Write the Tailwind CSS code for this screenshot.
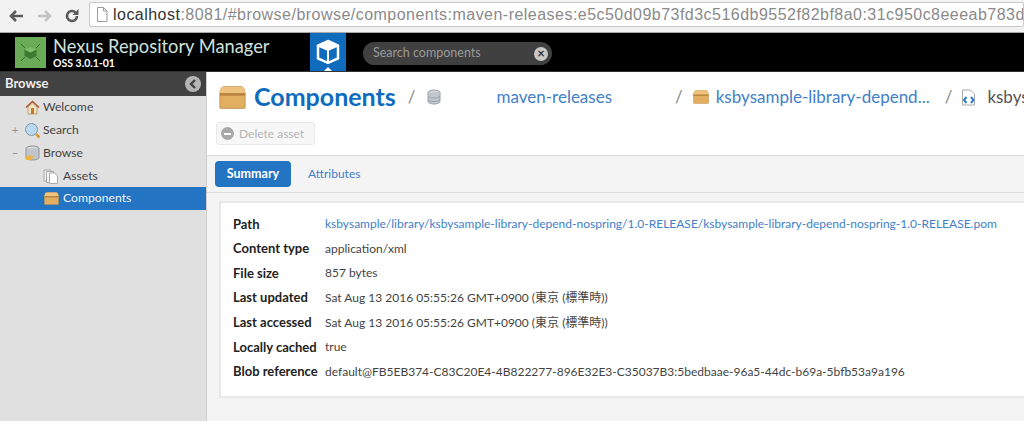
<!DOCTYPE html>
<html lang="en">
<head>
  <meta charset="UTF-8" />
  <title>Nexus Repository Manager</title>
  <script src="https://cdn.jsdelivr.net/npm/@tailwindcss/browser@4"></script>
</head>
<body class="w-[1024px] h-[421px] overflow-hidden bg-[#f4f4f4] font-['Lato','Noto_Sans_CJK_JP',sans-serif] text-[#444]">
  <!-- browser bar -->
  <div class="h-[33px] bg-[#f2f2f2] border-b border-[#a8a8a8] flex items-center pl-[9px] overflow-hidden">
    <svg class="w-[15px] h-[14px] shrink-0" viewBox="0 0 15 14"><path d="M7 2 2 7l5 5M2 7h12" fill="none" stroke="#5a5a5a" stroke-width="2.6"/></svg>
    <svg class="w-[15px] h-[14px] ml-[13px] shrink-0" viewBox="0 0 15 14"><path d="M8 2l5 5-5 5M13 7H1" fill="none" stroke="#c4c4c4" stroke-width="2.6"/></svg>
    <svg class="w-[16px] h-[16px] ml-[12px] shrink-0" viewBox="0 0 16 16"><path d="M13 8a5 5 0 1 1-1.6-3.7" fill="none" stroke="#5a5a5a" stroke-width="2.6"/><path d="M14.500 1v6h-6z" fill="#5a5a5a"/></svg>
    <div class="ml-[9px] mt-[-3px] flex-1 min-w-0 h-[25px] bg-white border border-[#c8c8c8] rounded-[2px] flex items-center pl-[6px] overflow-hidden">
      <svg class="w-[12px] h-[15px] shrink-0" viewBox="0 0 12 15"><path d="M1.500.5h6l3.500 3.500v10.500h-9.500z" fill="#fff" stroke="#9a9a9a"/><path d="M7.500.5v3.500h3.500" fill="none" stroke="#9a9a9a"/></svg>
      <span class="ml-[5px] text-[16px] tracking-[0.47px] whitespace-nowrap font-['Liberation_Sans',sans-serif] text-[#8a8a8a]"><span class="text-[#333]">localhost</span>:8081/#browse/browse/components:maven-releases:e5c50d09b73fd3c516db9552f82bf8a0:31c950c8eeeab783d</span>
    </div>
  </div>

  <!-- nexus header -->
  <div class="h-[38px] bg-black flex items-stretch">
    <div class="ml-[15px] my-auto w-[31px] h-[31px] bg-[#6aab58] flex items-center justify-center shrink-0">
      <svg class="w-[31px] h-[31px]" viewBox="0 0 31 31"><path d="M6 7l4 4m15-4l-4 4M6 24l4-4m15 4l-4-4" stroke="#2f5f28" stroke-width=".8"/><path d="M15.500 9.500l6 3v6.500l-6 3-6-3v-6.500z" fill="#3c7a33"/><path d="M15.500 9.500l6 3-6 3-6-3z" fill="#7cc06a"/></svg>
    </div>
    <div class="ml-[7px] w-[257px] shrink-0 pt-[3px]">
      <div class="text-[18.300px] leading-[20px] text-[#cfe0dc] whitespace-nowrap">Nexus Repository Manager</div>
      <div class="text-[10.500px] leading-[10px] font-bold text-white mt-[2px]">OSS 3.0.1-01</div>
    </div>
    <div class="relative w-[36px] bg-[#0f6cbd] flex items-center justify-center shrink-0">
      <svg class="w-[24px] h-[26px]" viewBox="0 0 24 26"><path d="M12 2l10 4.500v13L12 24 2 19.500v-13z" fill="none" stroke="#fff" stroke-width="2.500"/><path d="M2 6.500l10 4.500 10-4.500M12 11v13" fill="none" stroke="#fff" stroke-width="2"/><path d="M12 2l10 4.500-10 4.500-10-4.500z" fill="#fff"/></svg>
      <div class="absolute bottom-0 left-1/2 -ml-[4px] w-0 h-0 border-x-[4px] border-x-transparent border-b-[4px] border-b-white"></div>
    </div>
    <div class="ml-[17px] mt-[9px] w-[189px] h-[23px] rounded-full bg-[#404040] flex items-center justify-between pl-[10px] pr-[4px]">
      <span class="text-[12.500px] text-[#999]">Search components</span>
      <span class="w-[14px] h-[14px] rounded-full bg-[#c8c8c8] text-[#333] text-[13px] leading-[13px] font-bold text-center">×</span>
    </div>
  </div>

  <div class="flex h-[350px] border-t border-[#333]">
    <!-- sidebar -->
    <aside class="w-[207px] shrink-0 bg-[#e0e0e0] border-r border-[#cfcfcf]">
      <div class="h-[24px] bg-[#424242] flex items-center justify-between pl-[5px] pr-[5px]">
        <span class="text-[13px] font-bold text-[#eee]">Browse</span>
        <span class="w-[16px] h-[16px] rounded-full bg-[#b5b5b5] flex items-center justify-center">
          <svg class="w-[8px] h-[10px]" viewBox="0 0 8 10"><path d="M6 1 2 5l4 4" fill="none" stroke="#424242" stroke-width="2.400"/></svg>
        </span>
      </div>
      <ul class="text-[12.200px] text-[#444]">
        <li class="h-[23px] flex items-center pl-[25px]">
          <svg class="w-[15px] h-[15px]" viewBox="0 0 15 15"><path d="M1 7.500 7.500 1.500 14 7.500" fill="none" stroke="#b5542a" stroke-width="1.500"/><path d="M3 7l4.500-4 4.500 4v7H3z" fill="#f0e3c4" stroke="#a98a5a" stroke-width=".7"/><rect x="6" y="8" width="3" height="6" fill="#c9782f"/></svg>
          <span class="ml-[3px]">Welcome</span>
        </li>
        <li class="h-[23px] flex items-center pl-[10px]">
          <span class="w-[10px] text-[#999] text-center leading-none">+</span>
          <svg class="ml-[4px] w-[17px] h-[17px]" viewBox="0 0 17 17"><circle cx="7.500" cy="7.500" r="6" fill="#b9d9ef" stroke="#7d97ab"/><path d="M12 12l3.500 3.500" stroke="#d69a3c" stroke-width="2.500"/></svg>
          <span class="ml-[2px]">Search</span>
        </li>
        <li class="h-[23px] flex items-center pl-[10px]">
          <span class="w-[10px] text-[#888] text-center leading-none">–</span>
          <svg class="ml-[4px] w-[17px] h-[17px]" viewBox="0 0 17 17"><ellipse cx="8.500" cy="3.500" rx="6.500" ry="2.500" fill="#d4d8dc" stroke="#8b949c"/><path d="M2 3.500v9c0 1.500 3 2.500 6.500 2.500s6.500-1 6.500-2.500v-9" fill="#c0c6cc" stroke="#8b949c"/><path d="M1 12c3-2 7-2 9-.5l-3 3.500H2z" fill="#eeb443"/></svg>
          <span class="ml-[2px]">Browse</span>
        </li>
        <li class="h-[22px] flex items-center pl-[43px]">
          <svg class="w-[16px] h-[15px]" viewBox="0 0 16 15"><path d="M1 1h7v11H1z" fill="#eee" stroke="#999" stroke-width=".8"/><path d="M3.500 2.500h7v11h-7z" fill="#f4f4f4" stroke="#999" stroke-width=".8"/><path d="M6.500 4h5l3 3v7.500h-8z" fill="#fff" stroke="#999" stroke-width=".8"/></svg>
          <span class="ml-[4px]">Assets</span>
        </li>
        <li class="h-[23px] flex items-center pl-[44px] bg-[#2374c2] text-[#f0f6fb]">
          <svg class="w-[15px] h-[13px]" viewBox="0 0 30 26"><path d="M5 1h20q2 0 3 3l1 4v16q0 1-1 1H2q-1 0-1-1V8l1-4q1-3 3-3z" fill="#e2ae60" stroke="#c08f4b"/><path d="M1 8h28v3H1z" fill="#b98540"/><path d="M5 1h20q2 0 3 3l1 4H1l1-4q1-3 3-3z" fill="#efc27e"/></svg>
          <span class="ml-[4px]">Components</span>
        </li>
      </ul>
    </aside>

    <!-- main -->
    <main class="flex-1 min-w-0 overflow-hidden">
      <div class="h-[84px] bg-white border-b border-[#ddd]">
        <div class="h-[50px] flex items-center pl-[12px] whitespace-nowrap">
          <svg class="w-[27px] h-[25px] shrink-0" viewBox="0 0 30 26"><path d="M5 1h20q2 0 3 3l1 4v16q0 1-1 1H2q-1 0-1-1V8l1-4q1-3 3-3z" fill="#e2ae60" stroke="#c08f4b"/><path d="M1 8h28v3H1z" fill="#b98540"/><path d="M5 1h20q2 0 3 3l1 4H1l1-4q1-3 3-3z" fill="#efc27e"/></svg>
          <span class="ml-[8px] text-[25px] font-bold text-[#0f6cbd]">Components</span>
          <span class="ml-[12px] text-[17px] text-[#888]">/</span>
          <svg class="ml-[11px] w-[14px] h-[16px] shrink-0" viewBox="0 0 14 16"><ellipse cx="7" cy="3.500" rx="6" ry="2.500" fill="#cfd4d8" stroke="#9aa3aa"/><path d="M1 3.500v9C1 14 4 15 7 15s6-1 6-2.500v-9" fill="#c0c6cc" stroke="#9aa3aa"/><path d="M1 7.500c2 2 10 2 12 0M1 11c2 2 10 2 12 0" fill="none" stroke="#9aa3aa"/></svg>
          <span class="ml-[56px] text-[17px] text-[#4280c8]">maven-releases</span>
          <span class="ml-[63px] text-[17px] text-[#888]">/</span>
          <svg class="ml-[10px] w-[16px] h-[14px] shrink-0" viewBox="0 0 30 26"><path d="M5 1h20q2 0 3 3l1 4v16q0 1-1 1H2q-1 0-1-1V8l1-4q1-3 3-3z" fill="#e2ae60" stroke="#c08f4b"/><path d="M1 8h28v3H1z" fill="#b98540"/><path d="M5 1h20q2 0 3 3l1 4H1l1-4q1-3 3-3z" fill="#efc27e"/></svg>
          <span class="ml-[7px] text-[17px] text-[#4280c8]">ksbysample-library-depend...</span>
          <span class="ml-[15px] text-[17px] text-[#888]">/</span>
          <svg class="ml-[9px] w-[16px] h-[17px] shrink-0" viewBox="0 0 16 17"><path d="M1.500 1h8l4 4v11h-12z" fill="#fff" stroke="#aaa"/><path d="M5.500 8 3 11l2.500 3M10 8l2.500 3-2.500 3" fill="none" stroke="#2f80c8" stroke-width="2"/></svg>
          <span class="ml-[10px] text-[17px] text-[#555]">ksbysample</span>
        </div>
        <div class="pl-[9px]">
          <div class="w-[99px] h-[23px] bg-[#f7f7f7] border border-[#e8e8e8] rounded-[3px] flex items-center pl-[4px]">
            <span class="w-[13px] h-[13px] rounded-full bg-[#a8a8a8] flex items-center justify-center"><span class="w-[7px] h-[2px] bg-white"></span></span>
            <span class="ml-[5px] text-[12px] text-[#b5b5b5] whitespace-nowrap">Delete asset</span>
          </div>
        </div>
      </div>

      <div class="h-[37px] border-b border-[#ddd] flex items-center pl-[8px]">
        <span class="w-[76px] h-[26px] bg-[#2374c2] rounded-[4px] text-white font-bold text-[12.500px] flex items-center justify-center">Summary</span>
        <span class="ml-[17px] text-[12px] text-[#4280c8]">Attributes</span>
      </div>

      <div class="ml-[12px] mt-[8px] h-[197px] bg-white border-2 border-r-0 border-[#e8e8e8] pl-[12px] pt-[9px]">
        <dl class="grid grid-cols-[92px_1fr] auto-rows-[24.600px] items-center text-[12px] whitespace-nowrap">
          <dt class="font-bold text-[13px] text-[#222]">Path</dt><dd class="text-[#4280c8]">ksbysample/library/ksbysample-library-depend-nospring/1.0-RELEASE/ksbysample-library-depend-nospring-1.0-RELEASE.pom</dd>
          <dt class="font-bold text-[13px] text-[#222]">Content type</dt><dd>application/xml</dd>
          <dt class="font-bold text-[13px] text-[#222]">File size</dt><dd>857 bytes</dd>
          <dt class="font-bold text-[13px] text-[#222]">Last updated</dt><dd>Sat Aug 13 2016 05:55:26 GMT+0900 (東京 (標準時))</dd>
          <dt class="font-bold text-[13px] text-[#222]">Last accessed</dt><dd>Sat Aug 13 2016 05:55:26 GMT+0900 (東京 (標準時))</dd>
          <dt class="font-bold text-[13px] text-[#222]">Locally cached</dt><dd>true</dd>
          <dt class="font-bold text-[13px] text-[#222]">Blob reference</dt><dd>default@FB5EB374-C83C20E4-4B822277-896E32E3-C35037B3:5bedbaae-96a5-44dc-b69a-5bfb53a9a196</dd>
        </dl>
      </div>
    </main>
  </div>
</body>
</html>
